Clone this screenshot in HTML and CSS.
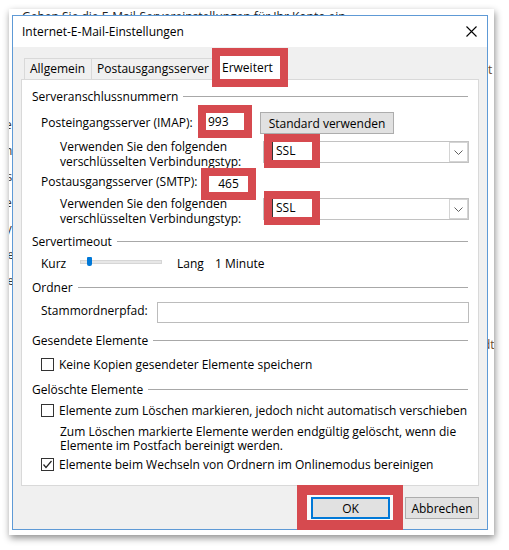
FILE: index.html
```html
<!DOCTYPE html>
<html lang="de">
<head>
<meta charset="UTF-8">
<title>Internet-E-Mail-Einstellungen</title>
<link rel="stylesheet" href="styles.css">
</head>
<body>

<div class="screen">
  <!-- account window behind the dialog -->
  <div class="backwin">
    <p class="back-intro">Geben Sie die E-Mail-Servereinstellungen für Ihr Konto ein.</p>
    <ul class="back-left">
      <li>Benutzerinformationen</li>
      <li>Ihr Name</li>
      <li>Adresse</li>
      <li>Serverinformationen</li>
      <li>Kontotyp</li>
      <li>Posteingangsserver</li>
      <li>Postausgangsserver</li>
    </ul>
    <ul class="back-right">
      <li>rt</li>
      <li>dt</li>
    </ul>
  </div>

  <div class="dialog">
    <div class="titlebar">
      <span class="title">Internet-E-Mail-Einstellungen</span>
      <svg class="close" viewBox="0 0 11 11" width="11" height="11">
        <path d="M0.5 0.5 L10.5 10.5 M10.5 0.5 L0.5 10.5" stroke="#000" stroke-width="1.1" fill="none"/>
      </svg>
    </div>

    <div class="body">
      <div class="tabs">
        <span class="tab tab-first">Allgemein</span>
        <span class="tab tab-second">Postausgangsserver</span>
        <span class="tab tab-active">Erweitert</span>
      </div>

      <div class="panel">
        <div class="group-title g-ports"><span>Serveranschlussnummern</span></div>
        <div class="row row-imap">
          <span class="port-label">Posteingangsserver (IMAP):</span>
          <span class="field port marked">993</span>
          <button class="btn btn-default">Standard verwenden</button>
        </div>
        <div class="row row-enc row-enc1">
          <span class="enc-label">Verwenden Sie den folgenden<br>verschlüsselten Verbindungstyp:</span>
          <span class="combo">
            <span class="combo-value marked">SSL</span>
            <span class="combo-arrow">
              <svg viewBox="0 0 9 5" width="9" height="5"><polyline points="0.5,0.5 4.5,4.5 8.5,0.5" fill="none" stroke="#606060"/></svg>
            </span>
          </span>
        </div>
        <div class="row row-smtp">
          <span class="port-label">Postausgangsserver (SMTP):</span>
          <span class="field port port-smtp marked">465</span>
        </div>
        <div class="row row-enc row-enc2">
          <span class="enc-label">Verwenden Sie den folgenden<br>verschlüsselten Verbindungstyp:</span>
          <span class="combo">
            <span class="combo-value marked">SSL</span>
            <span class="combo-arrow">
              <svg viewBox="0 0 9 5" width="9" height="5"><polyline points="0.5,0.5 4.5,4.5 8.5,0.5" fill="none" stroke="#606060"/></svg>
            </span>
          </span>
        </div>

        <div class="group-title g-timeout"><span>Servertimeout</span></div>
        <div class="row row-timeout">
          <span class="slider-label">Kurz</span>
          <span class="slider"><span class="thumb"></span></span>
          <span class="slider-end">Lang</span>
          <span>1 Minute</span>
        </div>

        <div class="group-title g-folder"><span>Ordner</span></div>
        <div class="row row-folder">
          <span class="folder-label">Stammordnerpfad:</span>
          <span class="field folder-path"></span>
        </div>

        <div class="group-title g-sent"><span>Gesendete Elemente</span></div>
        <div class="row row-check row-sent">
          <span class="checkbox"></span>
          <span>Keine Kopien gesendeter Elemente speichern</span>
        </div>

        <div class="group-title g-deleted"><span>Gelöschte Elemente</span></div>
        <div class="row row-check row-mark">
          <span class="checkbox"></span>
          <span>Elemente zum Löschen markieren, jedoch nicht automatisch verschieben</span>
        </div>
        <p class="hint">Zum Löschen markierte Elemente werden endgültig gelöscht, wenn die<br>Elemente im Postfach bereinigt werden.</p>
        <div class="row row-check row-purge">
          <span class="checkbox">
            <svg viewBox="0 0 11 11" width="11" height="11"><polyline points="1.5,5.5 4,8.5 9.5,2" fill="none" stroke="#222" stroke-width="1.2"/></svg>
          </span>
          <span>Elemente beim Wechseln von Ordnern im Onlinemodus bereinigen</span>
        </div>
      </div>

      <div class="footer">
        <span class="ok-mark"><button class="btn btn-ok">OK</button></span>
        <button class="btn btn-cancel">Abbrechen</button>
      </div>
    </div>
  </div>
</div>

</body>
</html>
```

FILE: styles.css
```css
body {
  margin: 0;
  background: #fff;
  font-family: "Open Sans", "Noto Sans", sans-serif;
  font-size: 12px;
  color: #000;
}

.screen {
  position: relative;
  width: 509px;
  height: 550px;
  overflow: hidden;
}

/* window behind */
.backwin {
  position: absolute;
  left: 9px;
  top: 9px;
  width: 485px;
  height: 526px;
  background: #fff;
  box-shadow: 1px 3px 7px rgba(0, 0, 0, 0.45);
  overflow: hidden;
}

.back-intro {
  margin: 0;
  padding: 0 0 0 13px;
  line-height: 15px;
  color: #222;
  white-space: nowrap;
}

.back-left {
  list-style: none;
  margin: 88px 0 0 -150px;
  padding: 0;
  width: 160px;
  text-align: right;
  line-height: 26px;
  color: #333;
}

.back-right {
  list-style: none;
  position: absolute;
  left: 474px;
  top: 53px;
  margin: 0;
  padding: 0;
  line-height: 16px;
  color: #6b4a2a;
}

.back-right li + li {
  margin-top: 259px;
}

/* dialog */
.dialog {
  position: absolute;
  left: 12px;
  top: 15px;
  width: 476px;
  height: 515px;
  box-sizing: border-box;
  border: 1px solid #5e9ad6;
  background: #f0f0f0;
  display: flex;
  flex-direction: column;
}

.titlebar {
  height: 31px;
  flex: none;
  background: #fff;
  display: flex;
  align-items: center;
  justify-content: space-between;
  padding: 0 10px 0 9px;
}

.close {
  display: block;
}

.body {
  flex: 1;
  padding: 9px 8px 0;
  display: flex;
  flex-direction: column;
}

.tabs {
  display: flex;
  align-items: flex-end;
  height: 23px;
  padding-left: 3px;
}

.tab {
  box-sizing: border-box;
  height: 21px;
  line-height: 19px;
  padding: 0 5px;
  border: 1px solid #d9d9d9;
  border-bottom: none;
  background: #f0f0f0;
  white-space: nowrap;
}

.tab-first {
  width: 68px;
}

.tab-second {
  width: 122px;
  margin-left: -1px;
}

.tab-active {
  position: relative;
  width: 76px;
  height: 23px;
  line-height: 23px;
  margin-left: -1px;
  padding-left: 10px;
  background: #fff;
  border: none;
}

.tab-active::after {
  content: "";
  position: absolute;
  left: 0;
  right: 0;
  top: -8px;
  bottom: -8px;
  border: 8px solid #d64a4f;
}

.panel {
  box-sizing: border-box;
  height: 407px;
  border: 1px solid #d9d9d9;
  background: #fff;
}

.group-title {
  display: flex;
  align-items: center;
  height: 16px;
  margin: 0 10px;
  white-space: nowrap;
}

.group-title::after {
  content: "";
  flex: 1;
  height: 1px;
  margin-left: 5px;
  background: #a8a8a8;
}

.g-ports { margin-top: 8px; }
.g-timeout { margin-top: 7px; }
.g-folder { margin-top: 8px; }
.g-sent { margin-top: 9px; }
.g-deleted { margin-top: 10px; }

.row {
  display: flex;
  padding: 0 9px 0 19px;
  white-space: nowrap;
}

.port-label {
  width: 164px;
  line-height: 15px;
}

.field {
  box-sizing: border-box;
  background: #fff;
  border: 1px solid #bcbcbc;
}

.port {
  position: relative;
  width: 40px;
  height: 19px;
  line-height: 17px;
  padding-left: 2px;
}

.marked::before {
  content: "";
  position: absolute;
  top: -8px;
  bottom: -8px;
  left: -8px;
  right: -8px;
  border: 8px solid #d64a4f;
}

.row-imap {
  margin-top: 8px;
  height: 22px;
  align-items: flex-start;
}

.row-imap .port-label {
  margin-top: 3px;
}

.btn {
  box-sizing: border-box;
  height: 22px;
  padding: 0;
  border: 1px solid #adadad;
  background: #e1e1e1;
  font: inherit;
  color: #000;
}

.btn-default {
  width: 134px;
  margin-left: 15px;
}

.row-enc {
  height: 30px;
  align-items: flex-start;
}

.row-enc1 { margin-top: 5px; }
.row-enc2 { margin-top: 3px; }

.enc-label {
  margin-left: 19px;
  line-height: 15px;
}

.combo {
  box-sizing: border-box;
  display: flex;
  align-items: center;
  justify-content: space-between;
  width: 206px;
  height: 22px;
  margin: 2px 0 0 auto;
  border: 1px solid #c2c2c2;
  background: #fff;
}

.combo-value {
  position: relative;
  box-sizing: border-box;
  width: 39px;
  height: 18px;
  margin-left: 8px;
  align-self: flex-start;
  line-height: 18px;
  padding-left: 3px;
  border-left: 1px solid #333;
}

.combo-value.marked::before {
  left: -9px;
  right: -9px;
}

.combo-arrow {
  box-sizing: border-box;
  display: flex;
  align-items: center;
  justify-content: center;
  width: 19px;
  height: 20px;
  border: 1px solid #d4d4d4;
}

.row-smtp {
  margin-top: 5px;
  align-items: flex-start;
}

.port-smtp {
  width: 41px;
  height: 18px;
  line-height: 16px;
  margin: 1px 0 0 3px;
  text-align: center;
  padding-left: 0;
}

.row-timeout {
  margin-top: 6px;
  height: 16px;
  align-items: center;
}

.slider-label {
  width: 39px;
}

.slider {
  position: relative;
  box-sizing: border-box;
  width: 82px;
  height: 4px;
  margin-top: -2px;
  border: 1px solid #d6d6d6;
  background: #e7e7e7;
}

.thumb {
  position: absolute;
  left: 6px;
  top: -4px;
  width: 5px;
  height: 9px;
  border-radius: 1px 1px 2px 2px;
  background: #0078d7;
}

.slider-end {
  width: 38px;
  margin-left: 15px;
}

.row-folder {
  margin-top: 7px;
  align-items: flex-start;
}

.folder-label {
  width: 116px;
  margin-top: 1px;
  line-height: 15px;
}

.folder-path {
  flex: 1;
  height: 21px;
}

.row-check {
  height: 13px;
  align-items: center;
}

.row-sent { margin-top: 10px; }
.row-mark { margin-top: 7px; }
.row-purge { margin-top: 5px; }

.checkbox {
  box-sizing: border-box;
  display: flex;
  align-items: center;
  justify-content: center;
  width: 13px;
  height: 13px;
  margin-right: 5px;
  border: 1px solid #333;
  background: #fff;
}

.hint {
  margin: 8px 0 0 38px;
  line-height: 14px;
}

.footer {
  display: flex;
  justify-content: flex-end;
  align-items: flex-start;
  margin-top: -1px;
}

.ok-mark {
  display: flex;
  padding: 2px 3px 1px 4px;
  border: 10px solid #d64a4f;
  background: #fafafa;
}

.btn-ok {
  width: 79px;
  border: 2px solid #0078d7;
}

.btn-cancel {
  width: 74px;
  margin: 12px 0 0 2px;
}
```
